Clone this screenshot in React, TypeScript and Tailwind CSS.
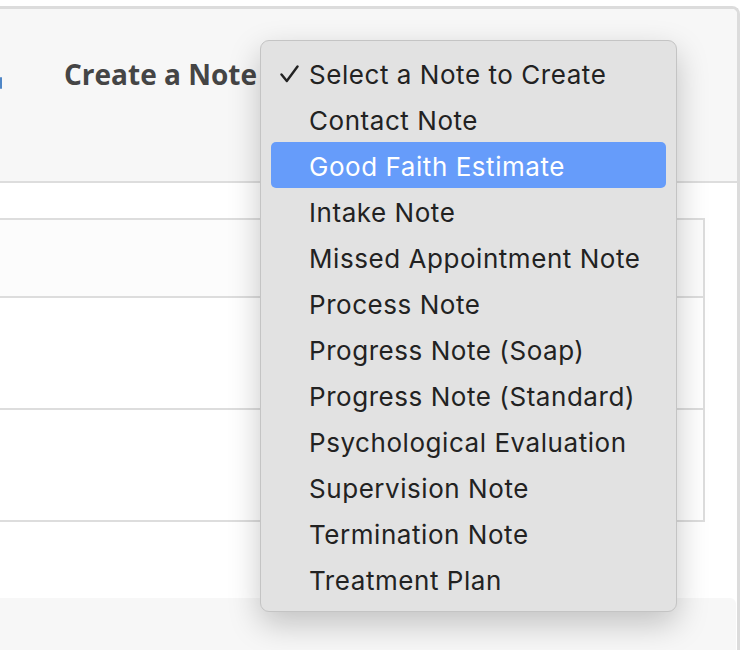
import React from 'react';

const notes = [
  'Select a Note to Create',
  'Contact Note',
  'Good Faith Estimate',
  'Intake Note',
  'Missed Appointment Note',
  'Process Note',
  'Progress Note (Soap)',
  'Progress Note (Standard)',
  'Psychological Evaluation',
  'Supervision Note',
  'Termination Note',
  'Treatment Plan',
];

const selected = 0;
const highlighted = 2;

function Check() {
  return (
    <svg width="19" height="18" viewBox="0 0 19 18" fill="none">
      <path d="M1.5 9.5 L6.8 16 L17.5 1.5" stroke="currentColor" strokeWidth="2.4" strokeLinecap="round" strokeLinejoin="round" />
    </svg>
  );
}

export default function App() {
  return (
    <div className="relative w-[742px] h-[650px] overflow-hidden bg-white pt-[6px]">
      <div className="w-[740px] h-[644px] flex flex-col border-t-[3px] border-r-[3px] border-[#dcdcdc] rounded-tr-[8px] overflow-hidden">
        {/* header */}
        <div className="h-[174px] shrink-0 flex items-start gap-[62px] bg-[#f7f7f7] border-b-2 border-[#dddddd] pt-[46px]">
          <span className="mt-[22px] block w-[2px] h-[12px] rounded-full bg-[#4f86c6]" />
          <h2
            className="text-[28px] leading-[38px] font-bold text-[#454545]"
            style={{ fontFamily: '"Open Sans", "Liberation Sans", sans-serif' }}
          >
            Create a Note
          </h2>
        </div>

        {/* body */}
        <div className="flex-1 bg-white pt-[35px] pr-[32px]">
          <div className="w-[705px] border-t-2 border-r-2 border-[#dddddd]">
            <div className="h-[78px] border-b-2 border-[#dddddd] bg-[#fcfcfc]" />
            <div className="h-[112px] border-b-2 border-[#dddddd] bg-white" />
            <div className="h-[112px] border-b-2 border-[#dddddd] bg-white" />
          </div>
        </div>

        {/* footer */}
        <div className="h-[52px] shrink-0 mr-[1px] bg-[#f7f7f7] rounded-tr-[6px]" />
      </div>

      {/* native select menu */}
      <div
        className="absolute left-[260px] top-[40px] w-[417px] py-[9px] bg-[#e2e2e2] border border-[#c4c4c4] rounded-[9px] shadow-[0_12px_32px_rgba(0,0,0,0.22)]"
        style={{ fontFamily: 'Inter, "Noto Sans", "Liberation Sans", sans-serif' }}
      >
        {notes.map((n, i) => (
          <div
            key={n}
            className={`h-[46px] mx-[10px] flex items-center gap-[10px] pl-[9px] pt-[2px] rounded-[5px] text-[26px] tracking-[0.55px] ${
              i === highlighted ? 'bg-[#669cfa] text-white' : 'text-[#222222]'
            }`}
          >
            <span className="w-[19px] flex items-center">{i === selected ? <Check /> : null}</span>
            <span>{n}</span>
          </div>
        ))}
      </div>
    </div>
  );
}
